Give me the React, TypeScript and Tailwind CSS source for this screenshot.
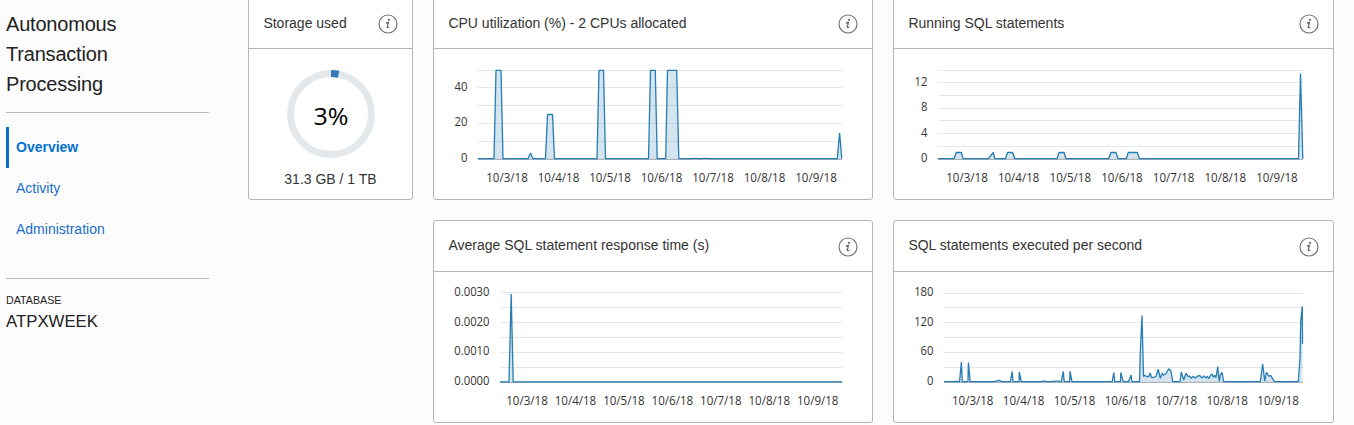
import type { ReactNode } from "react";

type Point = [number, number];
type Tick = { text: string; y: number };

const DATES = ["10/3/18", "10/4/18", "10/5/18", "10/6/18", "10/7/18", "10/8/18", "10/9/18"];

function InfoIcon() {
  return (
    <svg className="h-5 w-5 shrink-0" viewBox="0 0 20 20" fill="none">
      <circle cx="10" cy="10" r="9" stroke="#747474" strokeWidth="1.2" />
      <circle cx="11" cy="5.8" r="1.1" fill="#6a6a6a" />
      <path d="M8 9 10.4 8.4 9.2 13Q9.1 14.2 11.4 13" stroke="#6a6a6a" strokeWidth="1.3" />
    </svg>
  );
}

function Card({ title, raised, children }: { title: string; raised?: boolean; children: ReactNode }) {
  return (
    <section className="flex h-[203px] flex-col rounded-[3px] border border-[#b1b5c0] bg-white">
      <header className="flex h-[51px] shrink-0 items-center justify-between border-b border-[#b1b5c0] px-3.5">
        <h2
          className={
            raised
              ? "pb-0.5 pl-[0.4px] text-sm leading-5 whitespace-nowrap text-[#333333]"
              : "pl-[0.4px] text-sm leading-5 whitespace-nowrap text-[#333333]"
          }
        >
          {title}
        </h2>
        <span className="pt-0.5">
          <InfoIcon />
        </span>
      </header>
      <div className="min-h-0 flex-1">{children}</div>
    </section>
  );
}

type ChartProps = {
  grid: number[];
  left: number;
  right: number;
  base: number;
  points: Point[];
  ticks: Tick[];
  labelRight: number;
  firstDate: number;
  dateStep: number;
  dateY: number;
};

function AreaChart(p: ChartProps) {
  const line = p.points.map(([x, y]) => `${x},${y}`).join(" ");
  const area = `${p.points[0][0]},${p.base} ${line} ${p.points[p.points.length - 1][0]},${p.base}`;
  return (
    <svg className="block h-[150px] w-[438px]" viewBox="0 0 438 150">
      {p.grid.map((y) => (
        <line key={y} x1={p.left} x2={p.right} y1={y} y2={y} stroke="#e5e7ec" />
      ))}
      <line x1={p.left} x2={p.right} y1={p.base + 0.6} y2={p.base + 0.6} stroke="#9aa0a6" />
      <polygon points={area} fill="#267db3" fillOpacity="0.2" />
      <polyline points={line} fill="none" stroke="#267db3" strokeWidth="1.3" strokeLinejoin="bevel" />
      <g fill="#333333" fontSize="12" fontFamily="'Open Sans', 'Noto Sans', sans-serif">
        {p.ticks.map((t) => (
          <text
            key={t.text}
            x={p.labelRight}
            y={t.y}
            textAnchor="end"
            textLength={t.text.includes(".") ? 35.2 : t.text.length * 6.45}
            lengthAdjust="spacingAndGlyphs"
          >
            {t.text}
          </text>
        ))}
        {DATES.map((d, i) => (
          <text
            key={d}
            x={p.firstDate + i * p.dateStep}
            y={p.dateY}
            textAnchor="middle"
            textLength={41.5}
            lengthAdjust="spacingAndGlyphs"
          >
            {d}
          </text>
        ))}
      </g>
    </svg>
  );
}

// Each entry: [start, top start, top end, end, top y]
function plateaus(base: number, list: number[][]): Point[] {
  return list.flatMap(([a, b, c, d, y]): Point[] => [[a, base], [b, y], [c, y], [d, base]]);
}

const cpu: Point[] = [
  [44, 109.7],
  ...plateaus(109.7, [
    [60, 62, 67, 69, 21.3],
    [94, 96.5, 96.5, 99, 104],
    [111.5, 113.5, 118.5, 120.5, 65.5],
    [163, 165, 169.5, 171.5, 21.3],
    [214.5, 216.5, 221.3, 223.2, 21.3],
    [231.7, 233.5, 242.7, 244.8, 21.3],
    [258, 261, 262, 264, 109.4],
    [267, 270, 273, 276, 109.4],
    [403.3, 405.6, 405.6, 407.8, 84],
  ]),
];

const running: Point[] = [
  [44, 109.7],
  ...plateaus(109.7, [
    [60, 62.3, 67.3, 69.2, 103.5],
    [94.5, 99.2, 99.2, 100.8, 103.5],
    [111.5, 113.5, 118.6, 120.7, 103.5],
    [163, 165, 170, 172, 103.5],
    [214.7, 217, 222, 224, 103.5],
    [232.3, 234.2, 243.3, 245.5, 103.5],
    [404.5, 406.5, 406.5, 408.8, 24.5],
  ]),
];

const response: Point[] = [
  [66, 109.8],
  [75, 109.8],
  [77.2, 22],
  [79.2, 109.8],
  [408, 109.8],
];

const executed: Point[] = [
  [50, 109.7],
  ...plateaus(109.7, [
    [59, 61, 63, 64, 109.3],
    [65.5, 67.4, 67.4, 68.3, 90],
    [74, 74.4, 74.4, 76.2, 90.5],
    [101, 104, 105, 108, 108.3],
    [116.3, 118.2, 118.2, 119, 99.5],
    [125, 125.3, 125.3, 127.3, 100],
    [147, 150, 151, 153, 109.2],
    [157, 161, 164, 166, 109.2],
    [167.3, 169.3, 169.3, 170.2, 99.5],
    [175.7, 176, 176, 178, 99.5],
    [218.2, 219.8, 219.8, 220.8, 100.5],
    [226.5, 226.8, 226.8, 229.3, 100.5],
    [234.5, 237, 237, 238, 103],
  ]),
  [245.5, 109.7], [246.3, 80], [248, 43.5], [249.5, 104.5], [251, 103.3], [252.7, 104.7], [254.7, 104.7],
  [256, 101], [257.7, 105.5], [260.3, 105.3], [262, 104.3], [264.3, 97.3], [266.3, 106.3], [268.3, 101],
  [269.5, 103.3], [272, 101.5], [274.7, 96.7], [277, 99.3], [278.7, 109.7], [286, 109.7], [287.3, 100],
  [289.7, 108], [292, 101.3], [294.3, 104.7], [295.7, 104], [297, 106.3], [299.3, 104.3], [301.3, 106],
  [303.7, 104], [306, 103.7], [308, 106], [310, 104], [312, 106], [313.3, 104], [314.7, 106.7],
  [316.5, 103.5], [318, 102], [319.5, 105.3], [320.5, 103.3], [322, 105.7], [323.7, 94.5], [325.3, 109.3],
  [326.3, 103], [328, 100.3], [329.7, 109.7], [366.3, 109.7], [368.7, 92], [370.7, 109], [372.5, 100.3],
  [374.7, 104], [377, 103.7], [378.7, 107], [380.7, 109.7], [404.3, 109.7], [406, 86.3], [406.7, 49.7],
  [408.3, 34.3], [408.5, 72],
];

function StorageCard() {
  return (
    <Card title="Storage used">
      <div className="flex flex-col items-center">
        <svg className="mt-5 h-[90px] w-[90px]" viewBox="0 0 90 90">
          <circle cx="45" cy="45" r="40.5" fill="none" stroke="#e4e8ea" strokeWidth="7" />
          <circle
            cx="45"
            cy="45"
            r="40.5"
            fill="none"
            stroke="#3579b8"
            strokeWidth="7"
            pathLength="100"
            strokeDasharray="3 97"
            transform="rotate(-90 45 45)"
          />
          <text
            x="45"
            y="56"
            textAnchor="middle"
            textLength="35"
            lengthAdjust="spacingAndGlyphs"
            fontFamily="'Open Sans', 'Noto Sans', sans-serif"
            fontSize="24.5"
            fill="#000000"
          >
            3%
          </text>
        </svg>
        <p className="mt-2.5 text-sm leading-5 text-[#333333]">31.3 GB / 1 TB</p>
      </div>
    </Card>
  );
}

function Sidebar() {
  return (
    <aside className="ml-1.5 w-[203px] shrink-0 pt-[9px]">
      <h1 className="border-b border-[#b1b8c2] pb-[13px] text-xl leading-[30px] tracking-[-0.2px] text-[#222222]">
        Autonomous
        <br />
        Transaction
        <br />
        Processing
      </h1>
      <nav className="mt-3.5 flex flex-col border-b border-[#b1b8c2] pb-7 text-sm text-[#1a6fca]">
        <a className="flex h-[41px] items-center border-l-3 border-[#0572ce] pb-0.5 pl-[7px] font-bold text-[#0572ce]">
          Overview
        </a>
        <a className="flex h-[41px] items-center pb-0.5 pl-2.5">Activity</a>
        <a className="flex h-[41px] items-center pb-0.5 pl-2.5">Administration</a>
      </nav>
      <p className="mt-[13px] text-[10.7px] leading-4 text-[#222222]">DATABASE</p>
      <p className="mt-1 text-[16.8px] leading-5 text-[#222222]">ATPXWEEK</p>
    </aside>
  );
}

export default function App() {
  return (
    <div className="flex h-[425px] overflow-hidden bg-[#fcfcfc] font-['Liberation_Sans',Arial,sans-serif]">
      <Sidebar />
      <main className="-mt-[3px] ml-[39px] grid grid-cols-[165px_440px_441px] content-start items-start gap-5">
        <StorageCard />
        <Card title="CPU utilization (%) - 2 CPUs allocated">
          <AreaChart
            grid={[21.5, 38.5, 56.5, 74.5, 92.5]}
            left={44}
            right={408}
            base={109.7}
            points={cpu}
            ticks={[{ text: "40", y: 42 }, { text: "20", y: 77 }, { text: "0", y: 113 }]}
            labelRight={33.5}
            firstDate={73}
            dateStep={51.5}
            dateY={133}
          />
        </Card>
        <Card title="Running SQL statements">
          <AreaChart
            grid={[21.5, 33.5, 46.5, 59.5, 71.5, 84.5, 97.5]}
            left={44}
            right={409}
            base={109.7}
            points={running}
            ticks={[{ text: "12", y: 37 }, { text: "8", y: 62 }, { text: "4", y: 88 }, { text: "0", y: 113 }]}
            labelRight={33.5}
            firstDate={73}
            dateStep={51.65}
            dateY={133}
          />
        </Card>
        <div className="col-start-2">
          <Card title="Average SQL statement response time (s)" raised>
            <AreaChart
              grid={[20.5, 35.5, 50.5, 65.5, 80.5, 95.5]}
              left={66}
              right={408}
              base={109.8}
              points={response}
              ticks={[
                { text: "0.0030", y: 24 },
                { text: "0.0020", y: 54 },
                { text: "0.0010", y: 83 },
                { text: "0.0000", y: 113 },
              ]}
              labelRight={55.5}
              firstDate={93}
              dateStep={48.45}
              dateY={133}
            />
          </Card>
        </div>
        <Card title="SQL statements executed per second" raised>
          <AreaChart
            grid={[21.5, 35.5, 50.5, 65.5, 80.5, 95.5]}
            left={50}
            right={409}
            base={109.7}
            points={executed}
            ticks={[{ text: "180", y: 24 }, { text: "120", y: 54 }, { text: "60", y: 83 }, { text: "0", y: 113 }]}
            labelRight={39.5}
            firstDate={78.7}
            dateStep={50.9}
            dateY={133}
          />
        </Card>
      </main>
    </div>
  );
}
